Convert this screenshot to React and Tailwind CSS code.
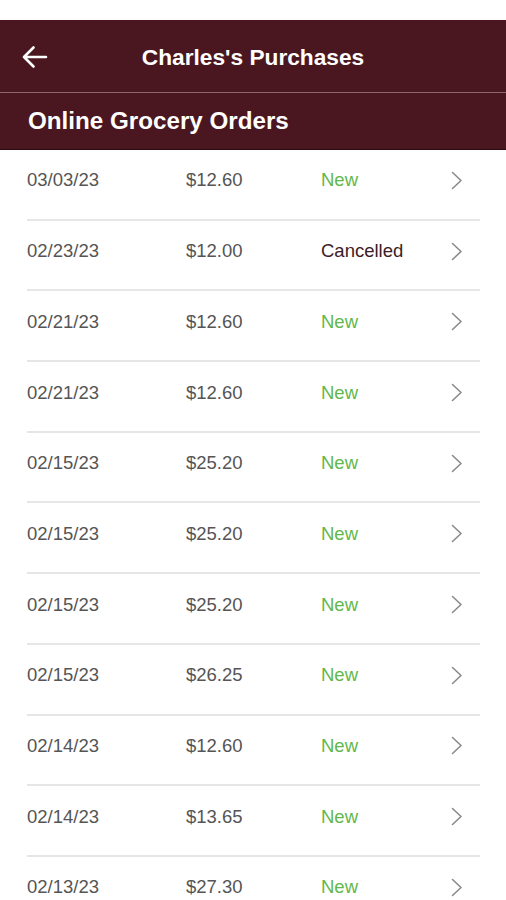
const orders = [
  { date: "03/03/23", total: "$12.60", status: "New" },
  { date: "02/23/23", total: "$12.00", status: "Cancelled" },
  { date: "02/21/23", total: "$12.60", status: "New" },
  { date: "02/21/23", total: "$12.60", status: "New" },
  { date: "02/15/23", total: "$25.20", status: "New" },
  { date: "02/15/23", total: "$25.20", status: "New" },
  { date: "02/15/23", total: "$25.20", status: "New" },
  { date: "02/15/23", total: "$26.25", status: "New" },
  { date: "02/14/23", total: "$12.60", status: "New" },
  { date: "02/14/23", total: "$13.65", status: "New" },
  { date: "02/13/23", total: "$27.30", status: "New" },
];

function Chevron() {
  return (
    <svg width="12" height="19" viewBox="0 0 12 19" fill="none" className="shrink-0">
      <path d="M1.5 1.5 L10 9.5 L1.5 17.5" stroke="#8a8a8a" strokeWidth="1.6" strokeLinecap="round" strokeLinejoin="round" />
    </svg>
  );
}

function BackArrow() {
  return (
    <svg width="28" height="24" viewBox="0 0 28 24" fill="none">
      <path d="M25 12 H3 M12.5 2.5 L3 12 L12.5 21.5" stroke="white" strokeWidth="2.6" strokeLinecap="round" strokeLinejoin="round" />
    </svg>
  );
}

export default function App() {
  return (
    <div className="w-[506px] h-[900px] overflow-hidden bg-white font-['Liberation_Sans',Arial,sans-serif]">
      <div className="h-[20px] bg-white" />

      {/* Top bar */}
      <div className="relative h-[73px] bg-[#4a1721] flex items-center justify-center border-b border-[#8c6a70]">
        <button className="absolute left-[21px] top-[25px]">
          <BackArrow />
        </button>
        <h1 className="text-white font-bold text-[22.7px] pt-[2px]">Charles's Purchases</h1>
      </div>

      {/* Section header */}
      <div className="h-[57px] bg-[#4a1721] flex items-center px-[28px] border-b border-[#2a0c12]">
        <h2 className="text-white font-bold text-[24.2px] pt-[1px]">Online Grocery Orders</h2>
      </div>

      {/* Orders */}
      <div className="pl-[27px] pr-[26px]">
        {orders.map((o, i) => (
          <div key={i} className="h-[70.7px] flex items-center pb-[8px] border-b-2 border-[#e6e6e6] text-[18.5px] text-[#555]">
            <span className="w-[159px]">{o.date}</span>
            <span className="w-[135px]">{o.total}</span>
            <span className={o.status === "New" ? "flex-1 text-[#62b84a]" : "flex-1 text-[#3d1c24]"}>{o.status}</span>
            <span className="mr-[17px]"><Chevron /></span>
          </div>
        ))}
      </div>
    </div>
  );
}
